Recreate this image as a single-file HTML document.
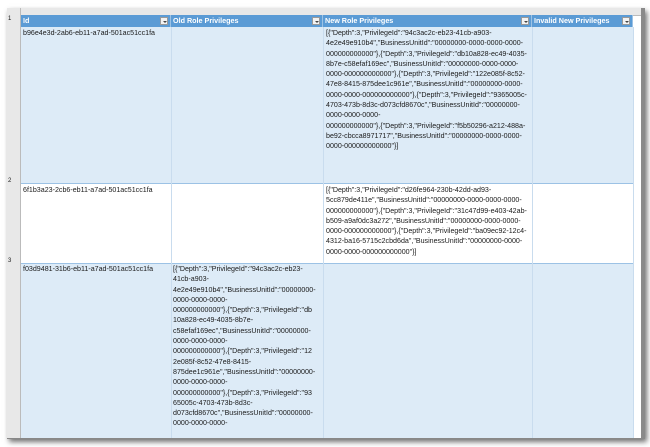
<!DOCTYPE html>
<html><head><style>
body{margin:0;width:650px;height:447px;background:#fff;position:relative;overflow:hidden;font-family:"Liberation Sans",sans-serif;}
.frame{position:absolute;left:7px;top:8px;width:634px;height:430px;background:#fff;box-shadow:2px 3px 5px rgba(0,0,0,.55);overflow:hidden;border-right:4px solid #8a8a8a;border-bottom:1px solid #888;}
.a{position:absolute;}
.t{position:absolute;font-size:7.1px;line-height:10.3px;color:#1a1a1a;white-space:pre;}
.h{position:absolute;top:7px;height:12px;background:#5b9bd5;color:#fff;font-weight:bold;font-size:7.2px;line-height:12px;padding-left:2px;box-sizing:border-box;border-right:1px solid #9cc2e5;}
.dd{position:absolute;right:2px;top:2px;width:8px;height:8px;background:#f2f2f2;border:1px solid #999;box-sizing:border-box;}
.dd:after{content:"";position:absolute;left:1.5px;top:2.5px;border-left:2px solid transparent;border-right:2px solid transparent;border-top:2px solid #444;}
</style></head><body>
<div class="frame">
 <div class="a" style="left:0;top:0;width:634px;height:7px;background:#e8e8e8;border-bottom:1px solid #bbb"></div>
 <div class="a" style="left:0;top:0;width:13px;height:430px;background:#e8e8e8;border-right:1px solid #bbb"></div>
 <div class="t" style="left:1px;top:6px;font-size:6px">1</div>
 <div class="t" style="left:1px;top:168px;font-size:6px">2</div>
 <div class="t" style="left:1px;top:248px;font-size:6px">3</div>
 <div class="h" style="left:14px;width:150px">Id<div class="dd"></div></div>
 <div class="h" style="left:164px;width:152px">Old Role Privileges<div class="dd"></div></div>
 <div class="h" style="left:316px;width:209px">New Role Privileges<div class="dd"></div></div>
 <div class="h" style="left:525px;width:101px">Invalid New Privileges<div class="dd"></div></div>
 <div class="a" style="left:14px;top:19px;width:612px;height:156px;background:#ddebf7;border-bottom:1px solid #9cc2e5"></div>
 <div class="a" style="left:14px;top:176px;width:612px;height:79px;background:#fff;border-bottom:1px solid #9cc2e5"></div>
 <div class="a" style="left:14px;top:256px;width:612px;height:180px;background:#ddebf7"></div>
 <div class="a" style="left:164px;top:19px;width:1px;height:420px;background:#c9dcee"></div>
 <div class="a" style="left:316px;top:19px;width:1px;height:420px;background:#c9dcee"></div>
 <div class="a" style="left:525px;top:19px;width:1px;height:420px;background:#c9dcee"></div>
 <div class="a" style="left:626px;top:19px;width:1px;height:420px;background:#c9dcee"></div>
 <div class="t" style="left:16px;top:20px">b96e4e3d-2ab6-eb11-a7ad-501ac51cc1fa</div>
 <div class="t" style="left:319px;top:20px">[{"Depth":3,"PrivilegeId":"94c3ac2c-eb23-41cb-a903-
4e2e49e910b4","BusinessUnitId":"00000000-0000-0000-0000-
000000000000"},{"Depth":3,"PrivilegeId":"db10a828-ec49-4035-
8b7e-c58efaf169ec","BusinessUnitId":"00000000-0000-0000-
0000-000000000000"},{"Depth":3,"PrivilegeId":"122e085f-8c52-
47e8-8415-875dee1c961e","BusinessUnitId":"00000000-0000-
0000-0000-000000000000"},{"Depth":3,"PrivilegeId":"9365005c-
4703-473b-8d3c-d073cfd8670c","BusinessUnitId":"00000000-
0000-0000-0000-
000000000000"},{"Depth":3,"PrivilegeId":"f5b50296-a212-488a-
be92-cbcca8971717","BusinessUnitId":"00000000-0000-0000-
0000-000000000000"}]</div>
 <div class="t" style="left:16px;top:177px">6f1b3a23-2cb6-eb11-a7ad-501ac51cc1fa</div>
 <div class="t" style="left:319px;top:177px">[{"Depth":3,"PrivilegeId":"d26fe964-230b-42dd-ad93-
5cc879de411e","BusinessUnitId":"00000000-0000-0000-0000-
000000000000"},{"Depth":3,"PrivilegeId":"31c47d99-e403-42ab-
b509-a9af0dc3a272","BusinessUnitId":"00000000-0000-0000-
0000-000000000000"},{"Depth":3,"PrivilegeId":"ba09ec92-12c4-
4312-ba16-5715c2cbd6da","BusinessUnitId":"00000000-0000-
0000-0000-000000000000"}]</div>
 <div class="t" style="left:16px;top:256px">f03d9481-31b6-eb11-a7ad-501ac51cc1fa</div>
 <div class="t" style="left:166px;top:256px">[{"Depth":3,"PrivilegeId":"94c3ac2c-eb23-
41cb-a903-
4e2e49e910b4","BusinessUnitId":"00000000-
0000-0000-0000-
000000000000"},{"Depth":3,"PrivilegeId":"db
10a828-ec49-4035-8b7e-
c58efaf169ec","BusinessUnitId":"00000000-
0000-0000-0000-
000000000000"},{"Depth":3,"PrivilegeId":"12
2e085f-8c52-47e8-8415-
875dee1c961e","BusinessUnitId":"00000000-
0000-0000-0000-
000000000000"},{"Depth":3,"PrivilegeId":"93
65005c-4703-473b-8d3c-
d073cfd8670c","BusinessUnitId":"00000000-
0000-0000-0000-</div>
</div>
</body></html>
